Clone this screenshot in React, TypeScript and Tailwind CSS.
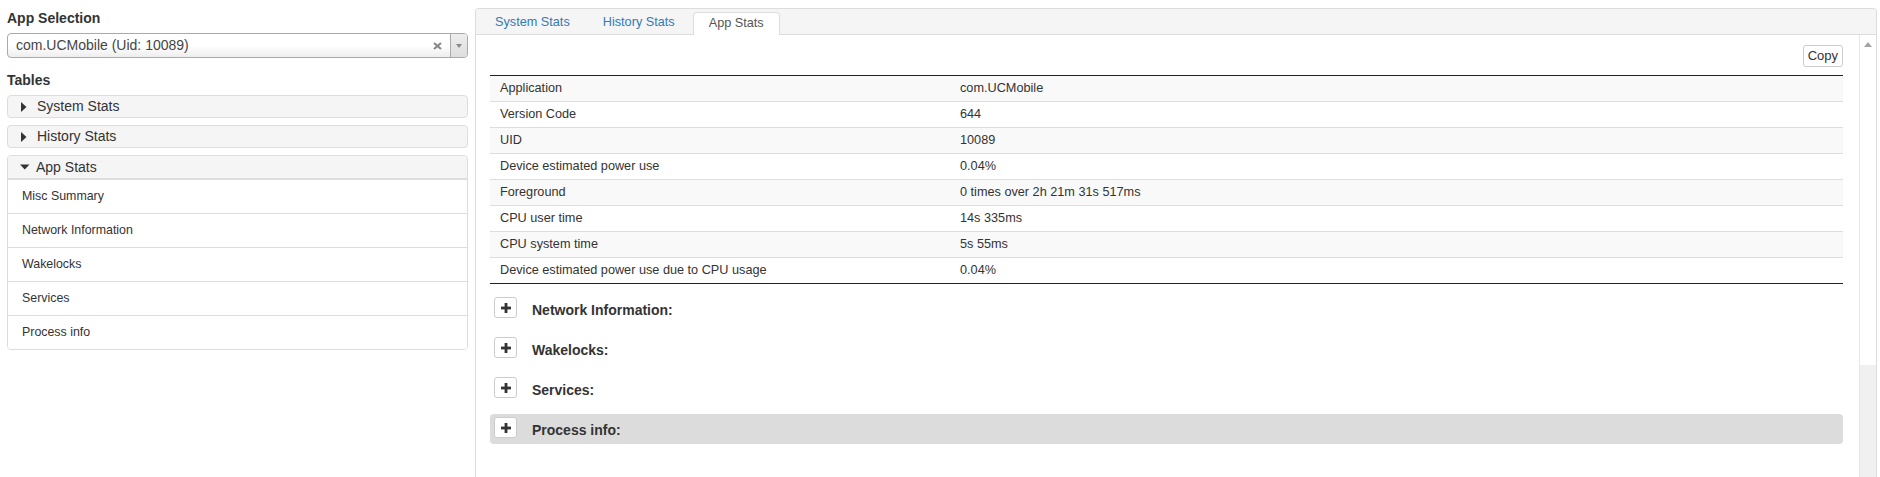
import React from 'react'

const statRows: [string, string][] = [
  ['Application', 'com.UCMobile'],
  ['Version Code', '644'],
  ['UID', '10089'],
  ['Device estimated power use', '0.04%'],
  ['Foreground', '0 times over 2h 21m 31s 517ms'],
  ['CPU user time', '14s 335ms'],
  ['CPU system time', '5s 55ms'],
  ['Device estimated power use due to CPU usage', '0.04%'],
]

const sections = ['Network Information:', 'Wakelocks:', 'Services:', 'Process info:']

const appItems = ['Misc Summary', 'Network Information', 'Wakelocks', 'Services', 'Process info']

const CaretRight = () => (
  <svg width="16" height="10" viewBox="0 0 16 10" className="shrink-0">
    <polygon points="0,0 5.5,5 0,10" fill="#333" />
  </svg>
)

const CaretDown = () => (
  <svg width="16" height="6" viewBox="0 0 16 6" className="shrink-0">
    <polygon points="0,0.5 9.5,0.5 4.75,5.5" fill="#333" />
  </svg>
)

const PlusBox = () => (
  <div className="w-[23px] h-[21px] shrink-0 bg-white border border-[#ccc] rounded-[3px] flex items-center justify-center">
    <svg width="10" height="10" viewBox="0 0 10 10">
      <rect x="0" y="3.6" width="10" height="2.8" fill="#333" />
      <rect x="3.6" y="0" width="2.8" height="10" fill="#333" />
    </svg>
  </div>
)

const App: React.FC = () => {
  return (
    <div
      className="w-[1880px] h-[477px] overflow-hidden bg-white flex text-[#333]"
      style={{ fontFamily: '"Liberation Sans", Arial, sans-serif' }}
    >
      {/* Left Side - selection and tables */}
      <div className="w-[475px] shrink-0 px-[7px] pt-[8px]">
        <div className="h-[20px] leading-[20px] text-[14px] font-bold">App Selection</div>

        {/* Select box */}
        <div className="mt-[5px] h-[25px] flex border border-[#aaa] rounded-[4px] overflow-hidden bg-linear-to-b from-white via-white to-[#eee]">
          <div className="flex-1 flex items-center pl-[8px] text-[14px] text-[#444]">
            com.UCMobile (Uid: 10089)
          </div>
          <div className="w-[26px] flex items-center justify-center">
            <svg width="9" height="8" viewBox="0 0 9 8">
              <path d="M1 1 L8 7 M8 1 L1 7" stroke="#888" strokeWidth="2.2" />
            </svg>
          </div>
          <div className="w-[17px] border-l border-[#aaa] bg-linear-to-b from-[#eee] to-[#ddd] flex items-center justify-center">
            <svg width="6" height="4" viewBox="0 0 6 4">
              <polygon points="0,0 6,0 3,4" fill="#888" />
            </svg>
          </div>
        </div>

        <div className="mt-[12px] h-[20px] leading-[20px] text-[14px] font-bold">Tables</div>

        <div className="mt-[5px] flex flex-col gap-[7px]">
          <div className="h-[23px] flex items-center pl-[13px] bg-[#f5f5f5] border border-[#ddd] rounded-[4px] text-[14px]">
            <CaretRight />
            <span>System Stats</span>
          </div>
          <div className="h-[23px] flex items-center pl-[13px] bg-[#f5f5f5] border border-[#ddd] rounded-[4px] text-[14px]">
            <CaretRight />
            <span>History Stats</span>
          </div>
          <div className="border border-[#ddd] rounded-[4px] overflow-hidden">
            <div className="h-[24px] flex items-center pl-[12px] bg-[#f5f5f5] border-b-2 border-[#ddd] text-[14px]">
              <CaretDown />
              <span>App Stats</span>
            </div>
            {appItems.map((item, index) => (
              <div
                key={item}
                className={`h-[33px] flex items-center pl-[14px] text-[12.4px] bg-white ${
                  index > 0 ? 'h-[34px] border-t border-[#ddd]' : ''
                }`}
              >
                {item}
              </div>
            ))}
          </div>
        </div>
      </div>

      {/* Right Side - tabs */}
      <div className="flex-1 mr-[3px] mt-[8px] h-[469px] border-x border-t border-[#ddd] rounded-t-[4px] flex flex-col overflow-hidden">
        <div className="h-[26px] shrink-0 bg-[#f5f5f5] border-b border-[#ddd] flex items-end pl-[4px] gap-[3px] text-[12.7px]">
          <div className="h-[22px] px-[15px] flex items-center text-[#337ab7]">System Stats</div>
          <div className="h-[22px] px-[15px] flex items-center text-[#337ab7]">History Stats</div>
          <div className="h-[23px] -mb-px px-[15px] flex items-center bg-white border border-b-0 border-[#ddd] rounded-t-[4px] text-[#555]">
            App Stats
          </div>
        </div>

        <div className="flex-1 flex">
          <div className="flex-1 pl-[14px] pr-[16px] pt-[10px]">
            <div className="flex justify-end">
              <button className="h-[22px] px-[4px] text-[13px] text-[#333] bg-white border border-[#ccc] rounded-[3px]">
                Copy
              </button>
            </div>

            {/* Stats table */}
            <div className="mt-[8px] border-y border-[#222] text-[12.7px]">
              {statRows.map(([label, value], index) => (
                <div
                  key={label}
                  className={`flex items-center ${index > 0 ? 'h-[26px] border-t border-[#ddd]' : 'h-[25px]'} ${
                    index % 2 === 0 ? 'bg-[#f9f9f9]' : 'bg-white'
                  }`}
                >
                  <div className="w-[460px] px-[10px]">{label}</div>
                  <div className="flex-1 px-[10px]">{value}</div>
                </div>
              ))}
            </div>

            {/* Collapsible sections */}
            <div className="mt-[10px] flex flex-col gap-[10px]">
              {sections.map((name, index) => (
                <div
                  key={name}
                  className={`h-[30px] flex items-start pt-[3px] pl-[4px] rounded-[4px] ${
                    index === sections.length - 1 ? 'bg-[#dcdcdc]' : ''
                  }`}
                >
                  <PlusBox />
                  <span className="self-center ml-[15px] text-[14px] font-bold">{name}</span>
                </div>
              ))}
            </div>
          </div>

          {/* Scrollbar */}
          <div className="w-[17px] shrink-0 bg-[#f0f0f0] border-l border-[#e6e6e6] flex flex-col">
            <div className="h-[330px] bg-white flex justify-center pt-[7px]">
              <svg width="8" height="5" viewBox="0 0 8 5">
                <polygon points="0,5 8,5 4,0" fill="#a3a3a3" />
              </svg>
            </div>
          </div>
        </div>
      </div>
    </div>
  )
}

export default App
